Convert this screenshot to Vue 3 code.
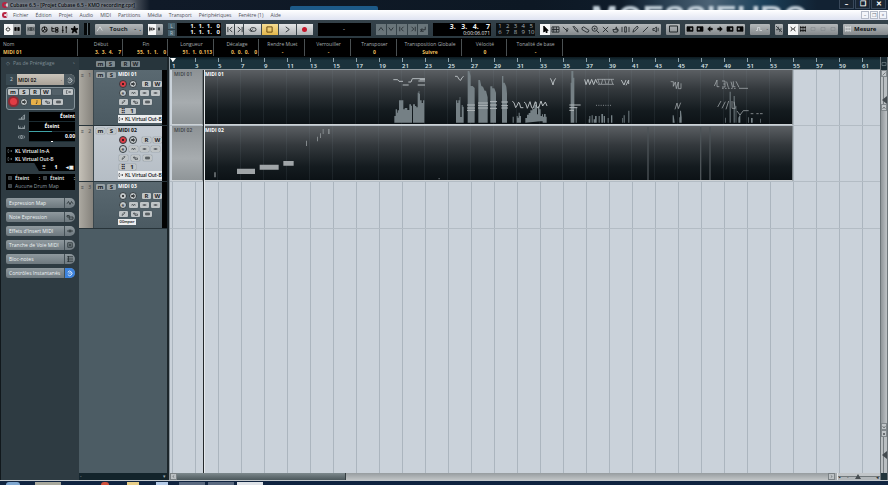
<script setup>
import { h } from 'vue'

const glyphs = {
  power: 'M2.5 2.5a2.4 2.4 0 1 0 3 0M4 1v3',
  panes: 'M1 2h2v4H1zM5 2h2v4H5z',
  rings: 'M3 2a2 2 0 1 0 0 4a2 2 0 1 0 0-4M5 2a2 2 0 1 1 0 4a2 2 0 1 1 0-4M0 1v6M8 1v6',
  ball: 'M4 1a3 3 0 1 0 0 6a3 3 0 1 0 0-6M4 1v3l3 1M4 4l-2 2',
  tree: 'M1 1v5h3M1 3h3M5 2h3v2H5zM5 5h3v2H5z',
  faders: 'M2 0v8M6 0v8M1 5h2M5 2h2',
  star: 'M4 0l1 3h3l-2.300 2l1 3L4 6L1.300 8l1-3L0 3h3z',
  curve: 'M0 7L4 1l3 5',
  scrollA: 'M1 1v6M0 4h8M5 2l2 2l-2 2M3 2v4',
  dot: 'M3 4l1-2l1 2l-1 2z',
  lines: 'M0 1h8M0 4h8M0 7h8M2 0v8',
  prev: 'M1 1v6M6 1L3 4l3 3',
  next: 'M7 1v6M2 1l3 3l-3 3',
  loop: 'M2 6h4a2 2 0 0 0 0-4H3a2 2 0 0 0-1 3M0 4l2 2l2-2',
  stop: 'M1 1h6v6H1z',
  play: 'M2 1l4 3l-4 3',
  up: 'M1 6l3-4l3 4',
  down: 'M1 2l3 4l3-4',
  left: 'M6 1L2 4l4 3',
  back: 'M7 1v4H1M3 3L1 5l2 2M0 7h5',
  arrow: 'M2 0v7l2-2l1 3l1-1l-1-2h2z',
  range: 'M0 1h8v6H0zM2 1v6M5 1v6M0 4h8',
  split: 'M1 1l5 5M4 4l3-1M5 7l2-3',
  glue: 'M1 0l3 5l3 2L6 4L2 0',
  erase: 'M0 2l2-1l6 4l-1 2H5L0 4z',
  zoom: 'M3 0a3 3 0 1 0 0 6a3 3 0 1 0 0-6M5 5l3 3M2 3h2M3 2v2',
  cross: 'M1 1l6 6M7 1L1 7',
  hand: 'M2 7h4V3L5 4V1L4 4H1l1 3M6 4h1v2',
  warp: 'M0 1v6M3 1v6M5 1v6M8 1v6M3 1h2M3 7h2',
  pen: 'M1 7l1-3l4-4l1 2l-4 4z',
  line: 'M1 7l6-6',
  speaker: 'M1 3h2l2-2v6L3 5H1zM7 2v4',
  box: 'M0 1h8v6H0z',
  nudgeL: 'M0 1h8v6H0zM4 2h3v4H4z',
  nudgeR: 'M0 1h8v6H0zM1 2h3v4H1z',
  aL: 'M4 1L1 4l3 3V5h3V3H4z',
  aR: 'M4 1l3 3l-3 3V5H1V3h3z',
  step: 'M0 6h2V2h3v4h3',
  link: 'M0 0l8 8M0 5h3V1M5 8V4h3',
  snap: 'M1 1l2 3l-2 3M7 1L5 4l2 3M3 4h2',
  grid: 'M1 0v8M4 0v8M7 0v8M0 2h8M0 6h8',
  wave: 'M0 5l2-3l2 4l2-4l2 3',
  fold: 'M0 2h3v2h5v3H3V4H0z',
  cells: 'M0 2h8v4H0zM2 2v4M4 2v4M6 2v4',
  dash: 'M0 4h8M3 2v4M5 2v4',
  note: 'M5 0v6H3v1h2',
  edit: 'M1 3a3 3 0 1 1 0 3M2 4h4',
  inp: 'M0 1v6h2M0 1h2M3 4h5M6 2l2 2l-2 2',
  ramp: 'M0 7h8V1L6 3v4M4 4v3M2 6v1',
  pan: 'M0 2v4h8V2M0 6l3-2M8 6L5 4',
  delay: 'M1 2L0 4l1 2M7 2l1 2l-1 2M3 2h2v4H3z',
  drum: 'M1 1h6v6H1zM3 3h2v2H3z'
}
const Icon = (p) =>
  h('svg', { viewBox: '0 0 8 8', class: 'icon', 'aria-hidden': 'true' }, [
    h('path', { d: glyphs[p.name], fill: p.solid ? 'currentColor' : 'none', 'fill-rule': 'evenodd', stroke: 'currentColor', 'stroke-width': 1 })
  ])
Icon.props = { name: String, solid: Boolean }

const menus = ['Fichier', 'Édition', 'Projet', 'Audio', 'MIDI', 'Partitions', 'Média', 'Transport', 'Périphériques', 'Fenêtre (1)', 'Aide']
const info = [
  ['Nom', 'MIDI 01'], ['Début', '3.  3.  4.    7'], ['Fin', '55.  1.  1.    0'], ['Longueur', '51.  1.  0.113'],
  ['Décalage', '0.  0.  0.    0'], ['Rendre Muet', '-'], ['Verrouiller', '-'], ['Transposer', '0'],
  ['Transposition Globale', 'Suivre'], ['Vélocité', '0'], ['Tonalité de base', '-']
]
const tools = ['range', 'split', 'glue', 'erase', 'zoom', 'cross', 'hand', 'warp', 'pen', 'line', 'speaker']
const nudges = ['nudgeL', 'nudgeR', 'aL', 'aR', 'nudgeL', 'nudgeR']
const bars = Array.from({ length: 31 }, (_, i) => i * 2 + 1)
const tracks = [
  { id: 1, name: 'MIDI 01', out: 'KL Virtual Out-B', armed: true },
  { id: 2, name: 'MIDI 02', out: 'KL Virtual Out-B', armed: true, selected: true },
  { id: 3, name: 'MIDI 03' }
]
const tabs = [
  ['Expression Map', 'wave'], ['Note Expression', 'fold'], ["Effets d'Insert MIDI", 'dash'],
  ['Tranche de Voie MIDI', 'drum'], ['Bloc-notes', 'lines'], ['Contrôles Instantanés', 'edit']
]
const tasks = ['orb', 'folder', 'gap', 'red', 'yellow', 'blue', 'tile', 'tile', 'lit']
</script>

<template>
  <div class="app">
    <header class="title">
      <span class="logo"></span>
      <h1>Cubase 6.5 - [Projet Cubase 6.5 - KMO recording.cpr]</h1>
      <span class="behind"></span>
      <span class="wallpaper">MOESSIEURO</span>
      <div class="winbtns">
        <button aria-label="Réduire">–</button>
        <button aria-label="Restaurer">❐</button>
        <button aria-label="Fermer">✕</button>
      </div>
    </header>

    <nav class="menu">
      <span class="logo"></span>
      <a v-for="m in menus" :key="m" href="#">{{ m }}</a>
      <div class="mdi">
        <button aria-label="Réduire le projet">–</button>
        <button aria-label="Restaurer le projet">❐</button>
        <button aria-label="Fermer le projet">×</button>
      </div>
    </nav>

    <div class="toolbar">
      <div class="grp w17"><button class="on" aria-label="Activer"><Icon name="power" /></button><button class="ink" aria-label="Fenêtres"><Icon name="panes" solid /></button></div>
      <div class="grp w9"><button aria-label="Délai"><Icon name="rings" /></button></div>
      <div class="grp w39 ink"><button v-for="i in ['ball', 'tree', 'faders', 'star']" :key="i" :aria-label="i"><Icon :name="i" :solid="i === 'star'" /></button></div>
      <div class="vu"><i></i><i></i></div>
      <div class="grp w48 touch"><Icon name="curve" /><button>Touch</button><span>-&nbsp; .</span></div>
      <div class="grp w15"><button class="on" aria-label="Défilement"><Icon name="scrollA" /></button><button aria-label="Suspendre"><Icon name="dot" solid /></button></div>
      <div class="locators">
        <div class="locnames"><button>L</button><button>R</button></div>
        <div class="lcd"><span>1.&nbsp; 1.&nbsp; 1.&nbsp;&nbsp; 0</span><span>1.&nbsp; 1.&nbsp; 1.&nbsp;&nbsp; 0</span></div>
      </div>
      <div class="grp transport">
        <button class="half" aria-label="Début"><Icon name="prev" /></button>
        <button class="half" aria-label="Fin"><Icon name="next" /></button>
        <button aria-label="Boucle"><Icon name="loop" /></button>
        <button class="gold" aria-label="Stop"><Icon name="stop" /></button>
        <button aria-label="Lecture"><Icon name="play" /></button>
        <button aria-label="Enregistrer"><b class="rec"></b></button>
      </div>
      <div class="lcd w53"><span class="mid">-</span></div>
      <div class="grp dim"><button v-for="i in ['up', 'down', 'prev', 'next', 'back']" :key="i" :aria-label="i"><Icon :name="i" /></button></div>
      <div class="lcd time"><b>3.&nbsp;&nbsp; 3.&nbsp;&nbsp; 4.&nbsp;&nbsp;&nbsp; 7</b><small>0:00:06.071</small></div>
      <div class="markers"><button v-for="n in 10" :key="n">{{ n }}</button></div>
      <div class="grp w121"><button class="on" aria-label="Sélection"><Icon name="arrow" solid /></button><button v-for="t in tools" :key="t" :aria-label="t"><Icon :name="t" /></button></div>
      <div class="grp w14"><button aria-label="Couleur"><Icon name="box" /></button></div>
      <div class="grp w60"><button v-for="(n, i) in nudges" :key="i" class="ink" :aria-label="'Décaler ' + i"><Icon :name="n" solid /></button></div>
      <div class="grp w20 pale"><button aria-label="Quantifier"><Icon name="step" /></button><span>-</span></div>
      <div class="grp w8"><button aria-label="Lier"><Icon name="link" /></button></div>
      <div class="grp w50"><button class="on" aria-label="Caler"><Icon name="snap" /></button><button class="ink" aria-label="Grille"><Icon name="grid" /></button><button v-for="n in 3" :key="n" class="faint" :aria-label="'Option ' + n"><Icon name="box" /></button></div>
      <div class="grp mesure"><Icon name="grid" /><button>Mesure</button></div>
    </div>

    <dl class="info">
      <div v-for="[k, v] in info" :key="k"><dt>{{ k }}</dt><dd>{{ v }}</dd></div>
    </dl>

    <main class="work">
      <aside class="inspector">
        <div class="preset"><span>◇</span><em>Pas de Préréglage</em><span>◔</span></div>
        <div class="iname"><span>2</span><b>MIDI 02</b><i>·</i><button aria-label="Éditer"><Icon name="edit" /></button></div>
        <section class="ipanel">
          <div class="irow">
            <button v-for="k in ['m', 'S', 'R', 'W']" :key="k" class="key">{{ k }}</button>
            <span class="key off"></span><button class="key end" aria-label="Entrée"><Icon name="inp" /></button>
          </div>
          <div class="irow second">
            <button class="big" aria-label="Armer"></button>
            <button class="round" aria-label="Monitor"><Icon name="speaker" solid /></button>
            <button class="key amber" aria-label="Base de temps"><Icon name="note" /></button>
            <button class="key" aria-label="Voies"><Icon name="fold" /></button>
            <button class="key" aria-label="Gel"><Icon name="cells" /></button>
          </div>
        </section>
        <section class="levels">
          <div><Icon name="ramp" /><span class="val">Éteint</span></div>
          <div><Icon name="pan" /><span class="val center">Éteint</span></div>
          <div><Icon name="delay" /><span class="val zero">0.00</span></div>
        </section>
        <section class="routing">
          <div><Icon name="inp" /><span>KL Virtual In-A</span></div>
          <div><Icon name="inp" /><span>KL Virtual Out-B</span></div>
          <div class="chan"><span>⠿</span><b>1</b><span>◂▣</span></div>
        </section>
        <section class="routing drums">
          <div><Icon name="drum" /><span>Éteint</span><i>:</i><Icon name="drum" /><span>Éteint</span><i>:</i></div>
          <div class="grey"><Icon name="drum" /><span>Aucune Drum Map</span></div>
        </section>
        <div class="tabs">
          <button v-for="([t, ic], i) in tabs" :key="t"><span>{{ t }}</span><i :class="{ blue: i === 5 }"><Icon :name="ic" /></i></button>
        </div>
      </aside>

      <section class="tracklist">
        <div class="thead"><button class="key">m</button><button class="key">S</button><i></i><button class="key">R</button><button class="key">W</button></div>
        <article v-for="t in tracks" :key="t.id" class="track" :class="{ selected: t.selected, short: !t.out }">
          <div class="strip"><span>≡</span><span>{{ t.id }}</span></div>
          <div class="ms"><button class="key">m</button><button class="key">S</button></div>
          <div class="ctl">
            <h2>{{ t.name }}</h2>
            <div class="crow">
              <button class="round" :class="{ armed: t.armed }" aria-label="Armer"><b></b></button>
              <button class="round" aria-label="Monitor"><Icon name="speaker" solid /></button>
              <i></i><button class="key">R</button><button class="key">W</button>
            </div>
            <div class="crow">
              <button class="round">e</button><button class="key" aria-label="Inserts"><Icon name="wave" /></button><button class="key" aria-label="Envois"><Icon name="dash" /></button><button class="key" aria-label="Égaliseur"><Icon name="dash" /></button>
            </div>
            <div class="crow wide">
              <button class="key" aria-label="Note"><Icon name="pen" /></button><button class="key" aria-label="Voies"><Icon name="fold" /></button><button class="key" aria-label="Gel"><Icon name="cells" /></button>
            </div>
            <div v-if="t.out" class="crow"><button class="key channel"><span>⠿</span><span>1</span></button></div>
            <button v-if="t.out" class="out"><Icon name="inp" />{{ t.out }}</button>
            <button v-else class="out small">00mpwr</button>
          </div>
          <div class="meter"></div>
        </article>
        <div class="tfoot"><span>-</span><span>▾</span></div>
      </section>

      <section class="arrange">
        <div class="ruler"><span v-for="b in bars" :key="b">{{ b }}</span></div>
        <div class="canvas">
          <div class="lane">
            <div class="clip muted"><span>MIDI 01</span></div>
            <div class="clip dark"><span>MIDI 01</span></div>
            <svg class="events" viewBox="36 42 1860 165" aria-hidden="true">
              <g class="bars">
                <path d="M703 200V180h4V160h4v10h2v-7h4V133h13v27h4v-4h8v6h6V145h5v4h3v51h3V145h6v5h4v4h4V110h3v-5h2v8h2v20h5v8h4v-8h4v67z" />
                <g transform="translate(840 0)">
                  <path d="M48 200V133h4v8h3v-8h4v-10h2v60h4V147h3v5h3v48zM83 200V45h5l4 15v30h6l6 6v104zM115 200V72h5l4 18l5 2l5 12h4l5 20v76zM151 200V91h6v6h6l5 13v90zM186 200V60h4v20h4l5 12l2 20v88zM218 200v-18h3v18zM230 200v-20h3v5h3v-15h3v10h4v20zM256 200v-14h5v-10h5v-5h5v-8h6v-4h6v-12h5v-9h3v37h3v-25h4v10h4v20h4v-5h3v20zM308 200v-18h4v-8h5v8h3v18zM392 200V80h2V45h6v20h3v135zM407 200v-45h3v45zM446 200v-10h2v-10h3v20zM455 200v-22h3v22zM461 200v-10h4v-10h5v20zM476 200v-20h3v20zM484 200v-26h5v26zM491 200v-20h4v20zM503 200v-14h3v14zM513 200v-22h4v22zM546 200v-14h2v14zM551 200v-22h3v22zM565 200v-36h3v36z" />
                </g>
                <g transform="translate(1440 0)">
                  <path d="M98 200v-22h3l3 22zM117 200v-16h2v16zM120 200v-36h3l2 20v16zM256 200v-15h2v15zM269 200v-93h3v93zM281 200v-80h3v80zM287 200v-50h2v50zM295 200v-15l6-10v25zM324 200v-16h2v16zM333 200v-14h5v14zM360 200v-12h2v12z" />
                </g>
              </g>
              <g class="notes">
                <path d="M700 71h13l4 5h12M728 87h18M745 78h8l4-10h38M775 75h20M773 87h22M779 71h16" />
                <g transform="translate(840 0)">
                  <path d="M45 61h7l6 10l4 2l4-8l5-4M331 67l4 8l4 12l3-12l5-8M81 147h24M81 156h24M81 163h24M114 141h30M114 148h30M114 156h30M150 137h21M150 147h21M150 157h21M184 138h20M184 149h20M184 156h20M217 136l5 4l5 15l5-8l4-9M238 140l4 15h8M252 138l5 4l5 15l8-20l5 18l4 2l7-20l5 18h5l7-20l5 15l8-12l5 12M388 147h34M388 155h24M388 163h14M434 70l4 16l6-16l5 16l6-16l6 16l6-16l5 12M544 72l8 15l6-15M558 88l8-16v12" />
                  <path stroke-dasharray="4 2" d="M472 70h50M475 85h48" />
                  <path class="thin" d="M474 70l4 14M484 84l4-14M494 70l4 14M504 84l4-14M514 70l4 14" />
                  <path class="thin" stroke-dasharray="3 4" d="M468 148h48" />
                </g>
                <g class="fine" transform="translate(1440 0)">
                  <path d="M92 77h8v14l6-13l3 20l6-20v20h8V82M105 160l6-19l4 17l7-18M223 90l8-18v20h7M246 75h9v18h-9M250 84h5M260 77l5 18M273 77l5 18M280 76v16h6M288 76l9 18M297 97h27M233 153l10-18M246 157l10-20M258 160l8-25M276 135v22h10l-4-20M291 165l9 12l10-13h16M332 173h8M349 173h7M360 173h8" />
                  <path stroke-dasharray="5 4" d="M246 97h44" />
                </g>
              </g>
            </svg>
          </div>
          <div class="lane">
            <div class="clip muted"><span>MIDI 02</span></div>
            <div class="clip dark"><span>MIDI 02</span></div>
            <svg class="events" viewBox="36 210 1860 165" aria-hidden="true">
              <path class="blocks" d="M231 338h54v16h-54zM299 326h57v15h-57zM370 315h31v14h-31z" />
              <path class="blocks faded" d="M163 349h4v15h-4zM438 254h3v16h-3zM471 242h3v14h-3zM480 232h3v14h-3zM488 219h3v15h-3zM504 219h5v15h-5z" />
              <path class="stems" d="M1464 213v159M1622 213v159M1650 213v159M835 368h5" />
            </svg>
          </div>
          <div class="lane last"></div>
          <div class="playhead"></div>
        </div>
        <div class="hscroll">
          <button aria-label="Vers la gauche"><Icon name="left" /></button>
          <div class="rail"><div class="thumb"></div></div>
          <button aria-label="Vers la droite"><Icon name="play" /></button>
          <div class="hzoom"><span>▪</span><span>-</span><i></i><span>◂</span></div>
        </div>
      </section>

      <aside class="vscroll">
        <button class="head" aria-label="Diviser"><Icon name="box" /></button>
        <button aria-label="Couleurs"><Icon name="line" /></button>
        <div class="vslide"><i></i></div>
        <button aria-label="Vers le haut"><Icon name="up" /></button>
        <div class="vrail"></div>
        <button aria-label="Vers le bas"><Icon name="down" /></button>
        <button aria-label="Préréglages de zoom"><Icon name="dot" solid /></button>
        <div class="vslide bottom"><i></i></div>
        <div class="corner"></div>
      </aside>
    </main>

    <footer class="taskbar"><i v-for="(t, i) in tasks" :key="i" :class="t"></i></footer>
  </div>
</template>

<style>
body { background: #0c1622; }
</style>

<style scoped>
.app { height: 100vh; display: flex; flex-direction: column; overflow: hidden; font: 5px/8px "Open Sans", "Noto Sans", sans-serif; color: #cdd5d9; }
.app * { box-sizing: border-box; }
button { font: inherit; color: inherit; border: 0; padding: 0; margin: 0; background: none; display: flex; align-items: center; justify-content: center; }
h1, h2, dl, dt, dd { margin: 0; font: inherit; }
i, em { font-style: normal; }
.icon { width: 6px; height: 6px; flex: none; display: block; overflow: visible; }

.title { height: 10px; flex: none; display: flex; align-items: center; overflow: hidden; position: relative; background: linear-gradient(90deg, #626973 0, #5d646d 130px, #101a28 150px, #0d1824 60%, #0f1c2a 70%, #24394b 74%, #4c6376 80%, #1b4059 86%, #122233 92%); }
.logo { width: 6px; height: 6px; margin: 0 2px 0 2px; border: 2px solid #b82342; border-right-color: #e0c4cc; border-radius: 50%; flex: none; }
.title h1 { color: #05080c; line-height: 10px; white-space: nowrap; font-weight: 600; text-shadow: 0 0 3px #c6ccd2; }
.behind { position: absolute; left: 290px; bottom: 0; width: 88px; height: 4px; background: #1d5a88; border-radius: 2px 2px 0 0; }
.wallpaper { position: absolute; right: 80px; top: 5px; font: bold 32px/24px "Liberation Sans", sans-serif; color: #c3d0da; filter: blur(1px); }
.winbtns { position: absolute; right: 2px; top: 0; display: flex; gap: 1px; color: #fff; height: 9px; }
.winbtns button { width: 15px; background: #1a2633; border: 1px solid #39485a; border-top: 0; font-size: 7px; font-weight: bold; }

.menu { height: 10px; flex: none; display: flex; align-items: center; background: linear-gradient(#fff, #dfe3f1); color: #4c4f56; }
.menu a { color: inherit; text-decoration: none; margin: 0 4px 0 3px; white-space: nowrap; }
.mdi { margin-left: auto; display: flex; gap: 1px; padding-right: 1px; }
.mdi button { width: 8px; height: 8px; border: 1px solid #b4bac8; background: #f3f5fa; color: #6d7482; line-height: 6px; }

.toolbar { height: 18px; flex: none; display: flex; align-items: center; gap: 5px; padding: 0 0 0 4px; background: linear-gradient(#35424a, #2b3940); overflow: hidden; }
.grp { height: 11px; flex: none; display: flex; align-items: stretch; background: linear-gradient(#b4b8ba, #84898c); color: #22282b; border-radius: 1px; }
.grp > button { flex: 1; min-width: 0; }
.grp .on { background: #f5f6f6; color: #000; }
.grp .ink, .grp.ink { color: #050505; }
.w8 { width: 8px; } .w9 { width: 9px; } .w14 { width: 14px; } .w15 { width: 15px; } .w17 { width: 17px; } .w20 { width: 20px; }
.w39 { width: 39px; } .w48 { width: 48px; } .w50 { width: 50px; } .w53 { width: 53px; } .w60 { width: 60px; } .w121 { width: 121px; }
.w121 .icon, .w39 .icon { width: 7px; height: 7px; }
.w14 .icon { width: 9px; height: 8px; }
.touch, .mesure, .pale { align-items: center; padding: 0 2px; }
.touch, .mesure { font-weight: bold; font-size: 6px; }
.touch .icon { color: #e0e3e4; }
.mesure { flex: 1 0 44px; gap: 3px; color: #0c0f10; }
.mesure .icon { color: #d9dcdd; }
.mesure > button { flex: none; }
.pale .icon { color: #dcdfe0; }
.grp .faint { color: #7f8588; }
.faint .icon { width: 4px; height: 4px; }
.vu { width: 6px; height: 12px; display: flex; gap: 1px; background: #56646b; flex: none; }
.vu i { flex: 1; background: #050809; }
.locators { width: 53px; flex: none; display: flex; gap: 2px; }
.locnames { width: 7px; display: flex; flex-direction: column; gap: 1px; color: #b9cbd4; }
.locnames button { height: 6px; background: #47616d; line-height: 6px; }
.lcd { height: 13px; flex: none; background: #000; color: #f0f2f2; display: flex; flex-direction: column; justify-content: center; align-items: flex-end; padding-right: 1px; font-size: 6px; line-height: 6px; white-space: nowrap; }
.locators .lcd { flex: 1; font-weight: bold; }
.lcd .mid { align-self: center; }
.transport { width: 87px; gap: 1px; background: #3d474c; }
.transport button { background: linear-gradient(#e3e5e6, #aeb2b4); }
.transport .icon { width: 7px; height: 7px; }
.transport .half { flex: 0 0 8px; }
.transport .gold { background: linear-gradient(#f6dd93, #e2b74c); color: #5c3e08; }
.rec { width: 5px; height: 5px; border-radius: 50%; background: #c4172b; }
.dim { width: 52px; gap: 1px; background: #37444a; color: #1b2225; }
.dim button { background: #69757a; }
.time { width: 58px; }
.time b { font-size: 7px; line-height: 8px; }
.time small { font-size: 5px; line-height: 5px; }
.markers { width: 39px; height: 13px; flex: none; display: grid; grid-template-columns: repeat(5, 1fr); background: #0b0f11; color: #a9b2b6; font-size: 6px; line-height: 6px; }

.info { height: 19px; flex: none; display: grid; grid-template-columns: 78px 45px 45px 46px 45px 46px 46px 46px 65px 45px 56px 1fr; background: #000; text-align: center; }
.info div { border-right: 1px solid #4a5052; margin: 1px 0; padding: 1px 1px 0 3px; white-space: nowrap; overflow: hidden; }
.info dt { color: #a6aeb1; }
.info dd { color: #edbf5c; font-weight: bold; line-height: 8px; white-space: pre; }
.info div:first-child { text-align: left; }
.info div:nth-child(n + 2):nth-child(-n + 5) dd { text-align: right; }

.work { flex: 1; min-height: 0; display: grid; grid-template-columns: 79px 90px 1fr 8px; }
.key { width: 9px; height: 6px; flex: none; background: #bfc4c6; color: #1d2327; border-radius: 1px; font-size: 6px; line-height: 6px; font-weight: bold; box-shadow: 0 0 1px #3a444a; }
.key .icon { width: 5px; height: 4px; }
.round { width: 8px; height: 8px; flex: none; border-radius: 50%; background: #c3c8ca; border: 1px solid #333c41; color: #0f1315; line-height: 6px; }
.round .icon { width: 4px; height: 4px; }
.round b { width: 2px; height: 2px; background: #111; border-radius: 50%; }
.round.armed { background: #dd3c46; }

.inspector { background: #2e3b42; display: flex; flex-direction: column; padding: 0 4px 0 5px; border-left: 1px solid #11181c; min-width: 0; }
.preset { height: 12px; display: flex; align-items: center; gap: 3px; color: #7d8b92; white-space: nowrap; }
.preset em { flex: 1; }
.iname { height: 11px; margin-top: 5px; display: flex; align-items: center; background: linear-gradient(#cbc5bb, #a9a298); border-radius: 1px 6px 6px 1px; color: #000; }
.iname > span { width: 11px; height: 11px; background: #394951; color: #c9d0d3; text-align: center; line-height: 11px; }
.iname b { flex: 1; font-weight: 600; padding-left: 1px; }
.iname button { width: 11px; height: 11px; border-radius: 0 6px 6px 0; background: #4c5960; color: #cfd5d7; margin-left: 2px; }
.ipanel { margin-top: 2px; height: 23px; border: 1px solid #85939a; border-radius: 3px; background: #47565e; padding: 1px 1px 0; }
.irow { display: flex; gap: 1px; align-items: center; }
.irow .key { width: 10px; }
.key.off { background: #536169; }
.key.end { margin-left: auto; }
.second { margin-top: 1px; }
.big { width: 11px; height: 11px; border-radius: 50%; background: #e23c45; border: 2px solid #8f2a33; flex: none; }
.big + .round { margin-right: 2px; }
.key.amber { background: #e8b049; }
.levels { margin: 2px 0 0; }
.levels div { display: flex; align-items: center; height: 10px; padding-left: 12px; color: #a8b3b8; }
.levels .icon { width: 7px; height: 6px; margin-right: 4px; }
.val { flex: 1; height: 10px; line-height: 9px; background: #000; color: #fff; text-align: right; border-bottom: 1px solid #1b2b31; font-weight: bold; }
.val.center { text-align: center; border-image: linear-gradient(90deg, #3fa3a6 50%, #1b2b31 50%) 1; }
.val.zero { border-image: linear-gradient(90deg, #1b2b31 48%, #fff 48%, #fff 52%, #1b2b31 52%) 1; }
.routing { margin-top: 5px; background: #000; color: #f2f4f4; font-weight: 600; }
.routing div { height: 8px; display: flex; align-items: center; padding-left: 2px; gap: 3px; white-space: nowrap; }
.routing .icon { width: 4px; height: 4px; color: #84939a; }
.routing .chan { background: linear-gradient(60deg, #2e3b42 28px, #000 29px); padding: 0 1px 0 36px; justify-content: space-between; }
.drums { margin-top: 3px; }
.drums i { margin-left: auto; }
.routing .grey { color: #8e9ba1; font-weight: 400; }
.tabs { margin-top: 8px; display: flex; flex-direction: column; gap: 4px; }
.tabs button { height: 10px; background: linear-gradient(#8f999e, #6d787e); border-radius: 2px 5px 5px 2px; color: #eef2f3; text-align: left; }
.tabs span { flex: 1; padding-left: 3px; white-space: nowrap; overflow: hidden; }
.tabs i { width: 11px; height: 10px; flex: none; display: flex; align-items: center; justify-content: center; border-left: 1px solid #434f55; color: #232b2f; border-radius: 0 5px 5px 0; }
.tabs .blue { background: #3c83de; color: #fff; }

.tracklist { background: #4c5c64; display: flex; flex-direction: column; min-width: 0; border-right: 2px solid #1c262b; }
.thead { height: 13px; flex: none; background: #27353c; display: flex; align-items: center; gap: 1px; padding-left: 17px; }
.thead i { width: 4px; }
.thead .key { background: #7d898e; }
.track { height: 56px; flex: none; display: grid; grid-template-columns: 15px 24px 1fr 5px; background: linear-gradient(#5a6971, #4b5a62); border-bottom: 1px solid #28343a; }
.track.selected { background: linear-gradient(#c4cbd2, #b5bdc5); }
.track.short { height: 47px; }
.strip { background: linear-gradient(90deg, #aca9a1, #85827c); color: #40464a; display: flex; justify-content: space-between; padding: 1px 2px; border-right: 1px solid #3b474d; }
.selected .strip { background: linear-gradient(90deg, #c5c1b8, #9c9891); }
.ms { display: flex; gap: 2px; padding: 2px 0 0 2px; }
.track:not(.selected) .ms .key { background: #98a1a5; }
.meter { background: #020303; }
.ctl { min-width: 0; overflow: hidden; }
.ctl h2 { color: #fff; font-weight: bold; line-height: 9px; height: 9px; }
.selected h2 { color: #111; }
.crow { height: 9px; display: flex; align-items: center; gap: 2px; padding-left: 1px; }
.crow i { width: 1px; }
.crow.wide { gap: 3px; }
.key.channel { width: 17px; justify-content: space-around; }
.out { height: 8px; width: 100%; background: #eceeef; color: #0c0f11; justify-content: flex-start; gap: 2px; padding-left: 1px; white-space: nowrap; font-weight: 600; overflow: hidden; line-height: 8px; font-family: Lato, sans-serif; }
.out .icon { width: 4px; height: 4px; }
.out.small { width: 18px; height: 6px; margin-top: 1px; padding: 0; justify-content: center; font-size: 4px; }
.tfoot { margin-top: auto; height: 7px; flex: none; background: #13242b; color: #a2adb2; display: flex; justify-content: space-between; padding: 0 1px; line-height: 6px; }

.arrange { min-width: 0; display: flex; flex-direction: column; background: #cad2da; border-left: 1px solid #8b969d; overflow: hidden; }
.ruler { height: 13px; flex: none; display: flex; padding-left: 2px; background: linear-gradient(#0c1a20, #1b323c 30%, #1b323c); border-bottom: 1px solid #90999e; position: relative; overflow: hidden; }
.ruler span { width: 23px; flex: none; padding: 5px 0 0 0; font-size: 6px; line-height: 8px; color: #dfe7ea; background: linear-gradient(#8fa2ab, #8fa2ab) 0 1px / 1px 4px no-repeat; font-weight: 600; }
.ruler::before { content: ""; position: absolute; left: 0; top: 1px; border: 3px solid transparent; border-top: 4px solid #fff; border-bottom: 0; }
.canvas { flex: 1; min-height: 0; position: relative; overflow: hidden; background: repeating-linear-gradient(90deg, #abb5be 0 1px, transparent 1px 23px) 2px 0; }
.lane { height: 56px; display: flex; padding-left: 2px; border-bottom: 1px solid #b3bcc4; position: relative; }
.lane.last { height: 47px; }
.clip { height: 55px; flex: none; line-height: 8px; font-weight: bold; padding-left: 2px; border-bottom: 1px solid #cdd2d5; }
.muted { width: 31px; background: linear-gradient(#8d9295, #a7acaf 60%, #8f9598); color: #3c4247; font-weight: 600; border-right: 1px solid #70777b; }
.dark { width: 590px; color: #fff; background: repeating-linear-gradient(90deg, transparent 0 14px, rgba(120, 135, 145, .12) 14px 15px, transparent 15px 23px), linear-gradient(#5b5f63, #34393d 35%, #141b1f 75%, #0c1216); border-right: 1px solid #7e868a; }
.events { position: absolute; left: 2px; top: 0; width: 620px; height: 55px; }
.bars { fill: #758085; }
.notes { fill: none; stroke: #b4babd; stroke-width: 3; }
.notes .thin, .fine { stroke-width: 2; }
.blocks { fill: #a0a5a8; }
.faded { fill: #82888b; }
.stems { stroke: #4c5357; stroke-width: 4; }
.playhead { position: absolute; left: 33px; top: 0; bottom: 0; width: 1px; background: #24292c; box-shadow: 1px 0 #e4e8eb; }
.hscroll { height: 7px; flex: none; display: flex; background: #a9aeb1; color: #262b2e; }
.hscroll button { width: 7px; background: #bcc1c4; border: 1px solid #7b8285; }
.hscroll .icon { width: 3px; height: 3px; }
.rail { flex: 1; background: linear-gradient(#969c9f, #c0c4c6); }
.thumb { width: 26%; height: 7px; background: linear-gradient(#7d898d, #4c585c); border-right: 1px solid #343d41; }
.hzoom { width: 43px; display: flex; justify-content: space-between; align-items: center; padding: 0 1px; margin-left: 2px; line-height: 6px; border-left: 1px solid #e3e6e8; background: linear-gradient(#c2c6c9 3px, #71787b 3px 4px, #b1b6b9 4px); }
.hzoom i { border: 3px solid transparent; border-top: 0; border-bottom: 5px solid #454c50; margin-right: 9px; }

.vscroll { display: flex; flex-direction: column; background: #aeb3b6; color: #2c3235; border: 0 solid #6d7579; border-width: 0 1px; }
.vscroll button { height: 7px; flex: none; border: 1px solid #80878b; background: #c0c5c8; }
.vscroll .head { height: 13px; background: #1b2b33; color: #93a0a6; border: 0; }
.vscroll .icon { width: 4px; height: 4px; }
.vrail { flex: 1; background: linear-gradient(90deg, #8f9599, #bfc3c6); }
.vslide { height: 27px; flex: none; display: flex; align-items: flex-end; justify-content: flex-end; background: linear-gradient(90deg, #b9bec1 2px, #757c80 2px 3px, #b9bec1 3px); }
.vslide i { border: 4px solid transparent; border-left: 0; border-right: 5px solid #444b4f; }
.vslide.bottom { height: 36px; align-items: center; }
.corner { height: 7px; flex: none; background: #22343b; }

.taskbar { height: 5px; flex: none; display: flex; gap: 3px; padding: 1px 0 0 6px; border-top: 1px solid #c4c9cc; background: #102440; }
.taskbar i { width: 26px; background: #5b6a80; }
.taskbar .orb { width: 14px; margin-right: 12px; background: #7ea6cf; border-radius: 7px 7px 0 0; }
.taskbar .folder { background: #a8a89c; }
.taskbar .gap { width: 34px; background: none; }
.taskbar .red { width: 8px; background: #d0503c; border-radius: 4px 4px 0 0; margin-right: 15px; }
.taskbar .yellow { width: 12px; background: #e9cf88; margin-right: 14px; }
.taskbar .blue { width: 12px; background: #b5cbe8; margin-right: 8px; }
.taskbar .lit { background: #dfe3e8; }
</style>
